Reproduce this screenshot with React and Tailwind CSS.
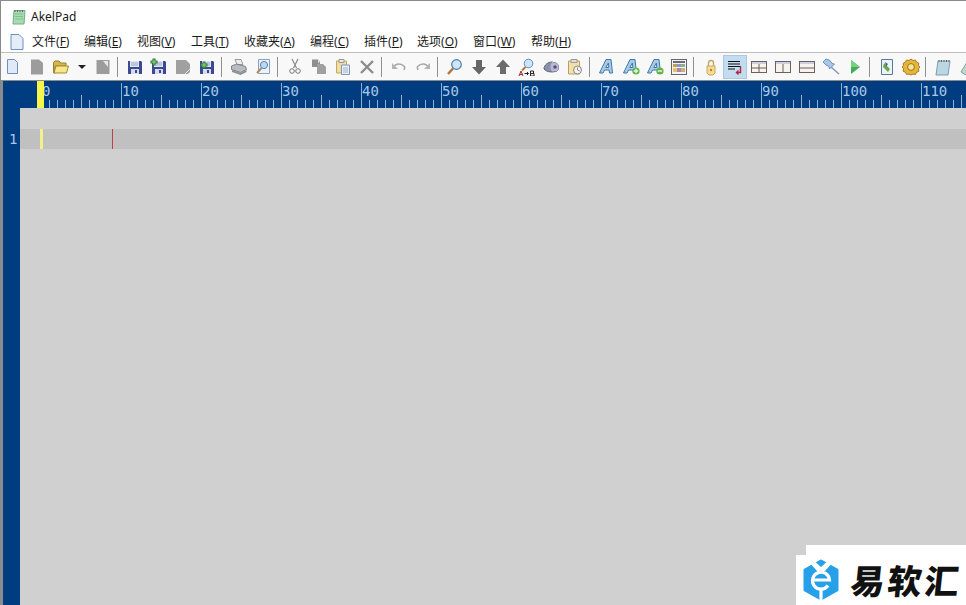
import React from "react";

const docPath = "M3.5 1.5h7l3 3v11h-10z";

const Disk = ({ plus, inset }) => (
  <>
    <path d="M2 3h13l1 1v12H2z" fill="#3c4a94" />
    <path d="M4 3h9v6H4z" fill="#e4e8f2" />
    <path d="M5 5h7M5 7h7" stroke="#9aa4c4" />
    <path d="M5 11h8v5H5z" fill="#d8dcea" />
    <path d="M9 12h2v3H9z" fill="#3c4a94" />
    {plus && (
      <g transform={inset ? "translate(2 3)" : "translate(0 0)"}>
        <path d="M4 .5v7M.5 4h7" stroke="#2c7a34" strokeWidth="3" />
        <path d="M4 1.5v5M1.5 4h5" stroke="#8ee07e" strokeWidth="1" />
      </g>
    )}
  </>
);

const FontA = ({ badge }) => (
  <>
    <path d="M1.5 15 8 1.5h5L14.5 15h-3l-.4-3H6.6L5 15zM7.8 9.5h3L10.4 5z" fill="#a9cbe8" stroke="#3f77a8" strokeWidth="1" />
    {badge && <circle cx="14" cy="13" r="3.6" fill="#62b44a" />}
    {badge && <path d={badge === "plus" ? "M14 10.8v4.4M11.8 13h4.4" : "M11.8 13h4.4"} stroke="#eaf7e0" strokeWidth="1.4" />}
  </>
);

const Pane = ({ d }) => (
  <>
    <rect x="1.5" y="3.5" width="15" height="11" fill="#f7f3ee" stroke="#6f5f5a" />
    <path d="M2 4h14v2H2z" fill="#c6d2e4" />
    <path d={d} stroke="#6f5f5a" fill="none" />
  </>
);

const icons = {
  newDoc: <path d={docPath} fill="#dfe9f8" stroke="#6f8fc0" />,
  closeGray: <path d="M3 1.5h8l4 3.5v11.500H3z" fill="#9c9c9c" />,
  folder: (
    <>
      <path d="M1.500 4.500 3 3h4l1.500 2H14v3H3v7H1.500z" fill="#d8b64a" stroke="#96802a" />
      <path d="M2 15l2-7h12.500l-2 7z" fill="#f8e68a" stroke="#a08c34" />
    </>
  ),
  reopen: (
    <>
      <path d="M2.500 2h13v14h-13z" fill="#9c9c9c" />
      <path d="M9 3h5v6z" fill="#e8e8e8" />
    </>
  ),
  save: <Disk />,
  savePlus: <Disk plus />,
  saveGray: (
    <>
      <path d="M2 2h10l4 4v8l-2 2H2z" fill="#a0a0a0" />
      <path d="M11 16l5-5" stroke="#e4e4e4" />
    </>
  ),
  print: (
    <>
      <path d="M5 1.500h6l2 5H7z" fill="#ececec" stroke="#9a9a9a" />
      <path d="M1.500 8l5-2 9 2.500 1 3-6 3-9-3z" fill="#b8bcc0" stroke="#7d8185" />
      <path d="M2 12l8.500 3 6-3v2l-6 3-8.500-3z" fill="#8a8e92" />
    </>
  ),
  preview: (
    <>
      <path d="M4.500 1.500h11v14h-11z" fill="#eef3fa" stroke="#84a0c4" />
      <circle cx="10" cy="7" r="3.600" fill="#bcd8f0" stroke="#5a82ac" />
      <path d="M7.500 10 3 15" stroke="#b08a60" strokeWidth="2" />
    </>
  ),
  cut: (
    <>
      <path d="M6 1l4.500 9M12 1 7.500 10" stroke="#8a8a8a" strokeWidth="1.200" />
      <circle cx="6" cy="13" r="2.300" fill="none" stroke="#777" />
      <circle cx="12" cy="13" r="2.300" fill="none" stroke="#777" />
    </>
  ),
  copy: (
    <>
      <path d="M2 1.500h6l2 2V9H2z" fill="#8e8e8e" />
      <path d="M7 6h6l3 3v7H7z" fill="#a0a0a0" />
      <path d="M8 1.500 10 4 8 5z" fill="#e4e4e4" />
    </>
  ),
  paste: (
    <>
      <path d="M2.500 3h10v12h-10z" fill="#f3dca0" stroke="#c4a860" />
      <path d="M5 1.500h5v3H5z" fill="#e8e8e8" stroke="#999" />
      <path d="M7.500 7h8v9.500h-8z" fill="#e8eef8" stroke="#7e98bc" />
      <path d="M9 10h5M9 12h5M9 14h5" stroke="#a4b4cc" />
    </>
  ),
  del: <path d="M3 3l12 12M15 3 3 15" stroke="#8c8c8c" strokeWidth="2.400" />,
  undo: (
    <>
      <path d="M3.500 9C6 5 11 5 14.500 8.500 15 10 14.500 11 14 12" fill="none" stroke="#a8a8a8" strokeWidth="1.600" />
      <path d="M2 5v6h6z" fill="#b4b4b4" />
    </>
  ),
  redo: (
    <>
      <path d="M14.500 9C12 5 7 5 3.500 8.500 3 10 3.500 11 4 12" fill="none" stroke="#a8a8a8" strokeWidth="1.600" />
      <path d="M16 5v6h-6z" fill="#b4b4b4" />
    </>
  ),
  find: (
    <>
      <circle cx="10.500" cy="6.500" r="4.800" fill="#cfe4f6" stroke="#4d7ea8" strokeWidth="1.200" />
      <path d="M7 10.500 2 16" stroke="#b7763c" strokeWidth="2.600" />
    </>
  ),
  down: <path d="M6 2h6v7h4l-7 7.500L2 9h4z" fill="#666" />,
  up: <path d="M9 1.500 16 9h-4v7H6V9H2z" fill="#6c6c6c" />,
  replace: (
    <>
      <circle cx="10.500" cy="5.500" r="4.300" fill="#cfe4f6" stroke="#5d8eb8" />
      <path d="M7.500 9 4 12.500" stroke="#b7763c" strokeWidth="2" />
      <path d="M1 18l2-5 2 5M2 16.500h2" stroke="#a02828" fill="none" />
      <path d="M6.500 15.500h4M9 14l1.500 1.500L9 17" stroke="#222" fill="none" />
      <path d="M12.500 13h3v2.500h-3zM12.500 15.500h3.500V18h-3.500z" fill="none" stroke="#222" />
    </>
  ),
  goTo: (
    <>
      <path d="M2 11c0-4 4-7 8-7l5 1.500c2 2 2 6 0 7.500-4 1.500-10 1.500-13-2z" fill="#8a92a8" stroke="#5a607a" />
      <path d="M10 4c-2 3-2 7 0 9.500l5-.5c2-2 2-6 0-7.500z" fill="#b2bcd4" />
      <circle cx="13" cy="9" r="1.800" fill="#7a3f8c" />
    </>
  ),
  recent: (
    <>
      <path d="M2.500 3h11v13h-11z" fill="#f3e2a8" stroke="#b8a060" />
      <path d="M5 1.500h6v3H5z" fill="#ddd" stroke="#999" />
      <circle cx="11.500" cy="12" r="4" fill="#f2f2f2" stroke="#888" />
      <path d="M11.500 9.500V12l2 1" stroke="#888" fill="none" />
    </>
  ),
  font: <FontA />,
  fontPlus: <FontA badge="plus" />,
  fontMinus: <FontA badge="minus" />,
  colors: (
    <>
      <rect x="1.500" y="1.500" width="15" height="15" fill="#f4f4f4" stroke="#666" />
      <path d="M3 3h12v2H3z" fill="#6a6a7a" />
      <path d="M3 6h4v3H3z" fill="#c89a5a" />
      <path d="M7 6h4v3H7z" fill="#8a9ac8" />
      <path d="M11 6h4v3h-4z" fill="#8ab48a" />
      <path d="M3 10h4v4H3z" fill="#e0c86a" />
      <path d="M7 10h4v4H7z" fill="#a88ab8" />
      <path d="M11 10h4v4h-4z" fill="#d8a878" />
    </>
  ),
  lock: (
    <>
      <path d="M6.500 8V5a2.500 2.500 0 0 1 5 0v3" fill="none" stroke="#c0a868" strokeWidth="1.400" />
      <path d="M5 8h8v7l-2 2H7l-2-2z" fill="#f6dc90" stroke="#c8a860" />
      <circle cx="9" cy="12" r="1.200" fill="#a88a40" />
    </>
  ),
  wrap: (
    <>
      <path d="M2 3.500h12M2 6h12M2 8.500h12M2 11h7" stroke="#111" strokeWidth="1.200" />
      <path d="M14.500 8v6.500H11" fill="none" stroke="#b0243c" strokeWidth="1.400" />
      <path d="M12.500 12.500 10.500 14.500 12.500 16.500" fill="none" stroke="#b0243c" strokeWidth="1.400" />
    </>
  ),
  split4: <Pane d="M9 6v8.500M2 10h14" />,
  split2v: <Pane d="M9 6v8.500" />,
  split2h: <Pane d="M2 10h14" />,
  pin: (
    <>
      <path d="M1 4l3-3 4 1.500 2 3 2.500.500-5 5-.500-2.500-3-1.500z" fill="#a8c8ea" stroke="#6e92bc" />
      <path d="M9 9l8 7" stroke="#8a9ab0" strokeWidth="1.600" />
    </>
  ),
  play: (
    <>
      <path d="M5 2l9 7-9 7z" fill="#3fae55" />
      <path d="M5 2l9 7H5z" fill="#78d080" />
    </>
  ),
  script: (
    <>
      <path d="M3.500 1.500h11v15h-11z" fill="#eef3fa" stroke="#5a7898" />
      <path d="M6 5l6 6-2 3-5-5z" fill="#6da84a" />
      <path d="M7 4l3 2-2 3z" fill="#3f6a9a" />
    </>
  ),
  gear: (
    <>
      <path d="M9 1l2 1.500 2.500-.5 1 2.200 2.300 1-.300 2.500L18 9l-1.500 1.800.300 2.500-2.300 1-1 2.200-2.500-.500L9 17l-2-1-2.500.500-1-2.200-2.300-1 .300-2.500L0 9l1.500-1.300-.300-2.500 2.300-1 1-2.200L7 2.500z" fill="#e6b63a" stroke="#a87c20" />
      <circle cx="9" cy="9" r="3.400" fill="#f6e59a" stroke="#9c6c1c" />
    </>
  ),
  notepad: (
    <>
      <path d="M4 3h12l-2 14H2z" fill="#bcd7e4" stroke="#7d9cb0" />
      <path d="M5 2v2M7.500 2v2M10 2v2M12.500 2v2M15 2v2" stroke="#666" />
    </>
  ),
  notepad2: <path d="M3 14 9 4l5 3-6 10z" fill="#bcdcc8" stroke="#7d9cb0" />,
};

const groups = [
  ["newDoc", "closeGray", "folder", "arrow", "reopen"],
  ["save", "savePlus", "saveGray", "savePlus2"],
  ["print", "preview"],
  ["cut", "copy", "paste", "del"],
  ["undo", "redo"],
  ["find", "down", "up", "replace", "goTo", "recent"],
  ["font", "fontPlus", "fontMinus", "colors"],
  ["lock", "wrap", "split4", "split2v", "split2h", "pin", "play"],
  ["script", "gear"],
  ["notepad", "notepad2"],
];

const menus = [
  ["文件", "F", "w-[52px]"],
  ["编辑", "E", "w-[53px]"],
  ["视图", "V", "w-[54px]"],
  ["工具", "T", "w-[53px]"],
  ["收藏夹", "A", "w-[66px]"],
  ["编程", "C", "w-[54px]"],
  ["插件", "P", "w-[53px]"],
  ["选项", "O", "w-[56px]"],
  ["窗口", "W", "w-[58px]"],
  ["帮助", "H", "w-[52px]"],
];

const rulerCells = [0, 10, 20, 30, 40, 50, 60, 70, 80, 90, 100, 110];

const ToolIcon = ({ name }) => {
  if (name === "arrow") {
    return (
      <div className="flex h-6 w-[18px] shrink-0 items-center justify-center">
        <div className="h-0 w-0 border-x-[4px] border-t-[4px] border-x-transparent border-t-[#222]" />
      </div>
    );
  }
  const active = name === "wrap";
  return (
    <div
      className={`flex h-6 w-6 shrink-0 items-center justify-center ${
        active ? "bg-[#c4dcf0] outline outline-1 -outline-offset-1 outline-[#a8c8e4]" : ""
      }`}
    >
      <svg width="18" height="18" viewBox="0 0 18 18">
        {name === "savePlus2" ? <Disk plus inset /> : icons[name]}
      </svg>
    </div>
  );
};

const RulerCell = ({ label }) => (
  <div className="relative h-[27px] w-[80px] shrink-0 pl-[1px] text-[14px] leading-[20px] text-[#a8c8ea]">
    {label}
    <svg className="absolute left-0 top-0" width="80" height="27">
      {[0, 8, 16, 24, 32, 40, 48, 56, 64, 72].map((x, i) => (
        <line
          key={x}
          x1={x + 0.5}
          x2={x + 0.5}
          y1={i === 0 ? 2 : i === 5 ? 14 : 19}
          y2="27"
          stroke="#8fb0d4"
        />
      ))}
    </svg>
  </div>
);

const WatermarkLogo = () => (
  <svg width="38" height="42" viewBox="0 0 38 42">
    <path d="M19 2 35 11v20L19 40 3 31V11z" fill="#27a0ea" stroke="#27a0ea" strokeWidth="3" strokeLinejoin="round" />
    <path d="M10 0l9 8 9-8 3 3-8 9h-8L7 3z" fill="#fff" />
    <path d="M26 26.500A8.500 8.500 0 1 1 27.500 21h-17" fill="none" stroke="#fff" strokeWidth="3.200" />
    <path d="M19 29.500V42" stroke="#fff" strokeWidth="3.200" />
  </svg>
);

export default function App() {
  return (
    <div className="relative flex h-[605px] w-[966px] flex-col overflow-hidden border-l border-t border-[#8a8a8a] bg-white font-['Noto_Sans','Noto_Sans_CJK_SC',sans-serif] text-[#1a1a1a]">
      <div className="flex h-[29px] shrink-0 items-center pl-[10px] pt-[2px]">
        <svg width="16" height="16" viewBox="0 0 16 16">
          <path d="M3 1.500h11l-1 13.500H2z" fill="#a6dcb0" stroke="#7aa888" />
          <path d="M4 5h8M4 7.500h8M4 10h8" stroke="#7ec08c" />
          <path d="M4 1v2M6.500 1v2M9 1v2M11.500 1v2" stroke="#666" />
        </svg>
        <span className="ml-[4px] text-[12px] leading-none">AkelPad</span>
      </div>

      <div className="flex h-[22px] shrink-0 items-center pl-[9px] pt-[2px] text-[12px] leading-none">
        <svg className="mr-[8px]" width="14" height="16" viewBox="0 0 14 16">
          <path d="M1 .500h8l4 4v11H1z" fill="#e4edf9" stroke="#6f8fc0" />
        </svg>
        {menus.map(([label, key, width]) => (
          <div key={key} className={`shrink-0 ${width}`}>
            {label}(<span className="underline">{key}</span>)
          </div>
        ))}
      </div>

      <div className="flex h-[28px] shrink-0 items-center border-t border-[#bdbdbd] bg-[#f8f8f8]">
        {groups.map((group, i) => (
          <React.Fragment key={group[0]}>
            {i > 0 && (
              <div className="h-[20px] w-[8px] shrink-0 pl-[2px]">
                <div className="h-full w-px bg-[#8f8f8f]" />
              </div>
            )}
            {group.map((name) => (
              <ToolIcon key={name} name={name} />
            ))}
          </React.Fragment>
        ))}
      </div>

      <div className="flex min-h-0 flex-1 flex-col border-l-[2px] border-t-[1px] border-[#8c8c8c] bg-[#003c80]">
        <div className="relative flex h-[27px] shrink-0 pl-[38px] font-['DejaVu_Sans_Mono',monospace]">
          {rulerCells.map((n) => (
            <RulerCell key={n} label={n} />
          ))}
          <div className="absolute left-[34px] top-0 h-full w-[7px] bg-[#f6f64a]" />
        </div>

        <div className="flex min-h-0 flex-1">
          <div className="w-[17px] shrink-0 pl-[6px] pt-[21px] font-['DejaVu_Sans_Mono',monospace] text-[14px] leading-[20px] text-[#a8c8ea]">
            1
          </div>
          <div className="flex-1 bg-[#d0d0d0] pt-[21px]">
            <div className="flex h-[20px] bg-[#c0c0c0]">
              <div className="ml-[20px] h-full w-[3px] bg-[#f4f08c]" />
              <div className="ml-[69px] h-full w-px bg-[#c0404a]" />
            </div>
          </div>
        </div>
      </div>

      <div className="absolute bottom-0 right-0 flex h-[50px] w-[170px] items-end bg-white">
        <div className="absolute -top-[10px] right-0 h-[10px] w-[160px] bg-white" />
        <div className="flex items-center pb-[4px] pl-[6px]">
          <WatermarkLogo />
          <span className="ml-[11px] -skew-x-6 font-['Noto_Sans_CJK_SC',sans-serif] text-[34px] font-black leading-none tracking-[3px] text-[#111]">
            易软汇
          </span>
        </div>
      </div>
    </div>
  );
}
